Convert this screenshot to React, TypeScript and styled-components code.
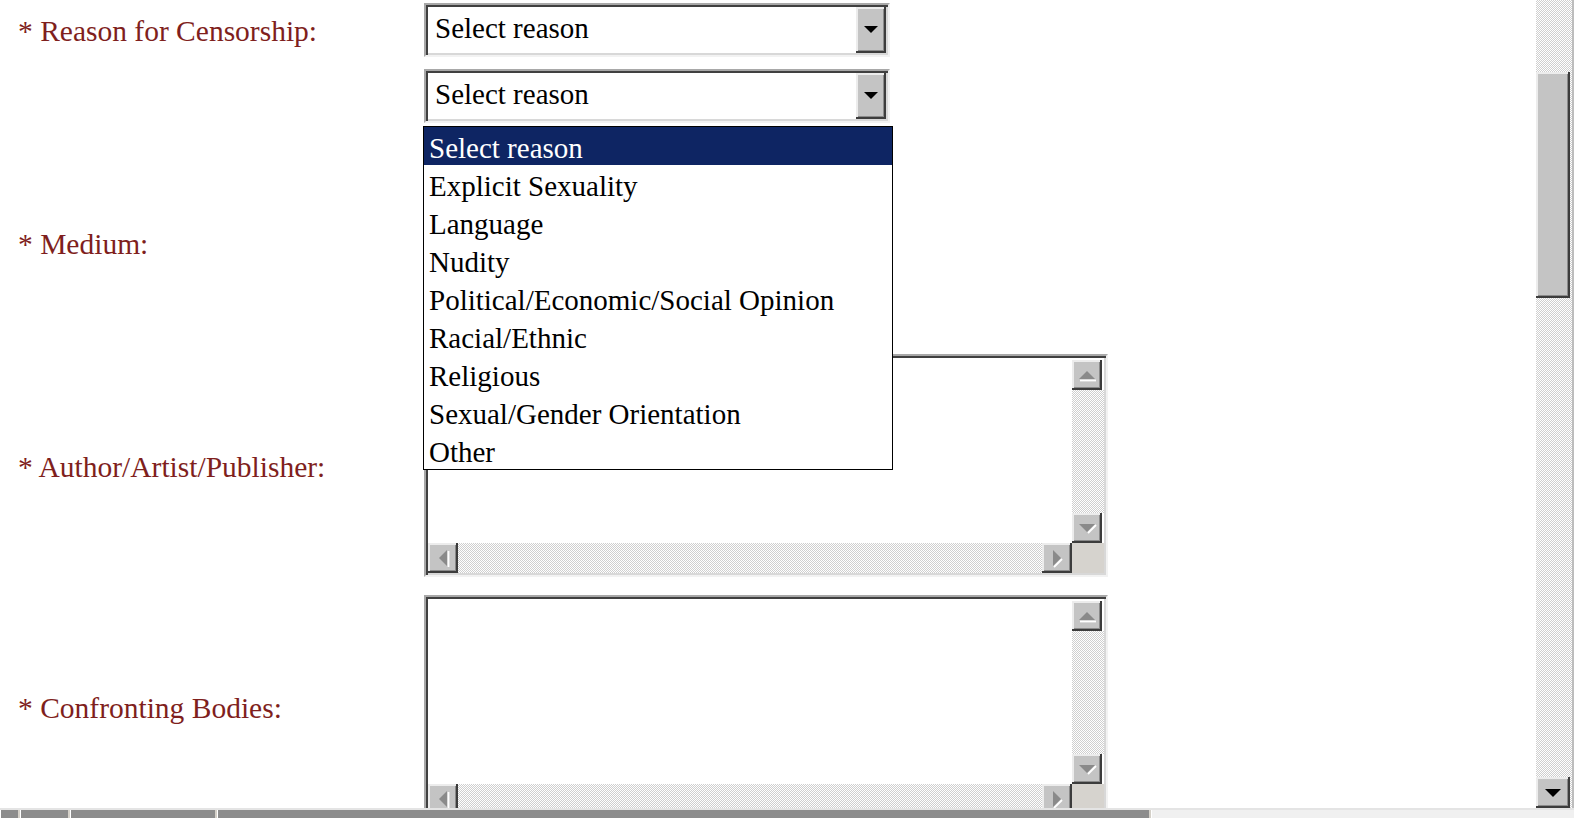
import React from "react";
import styled, { createGlobalStyle, css } from "styled-components";

const GlobalStyle = createGlobalStyle`
  html, body { margin: 0; padding: 0; background: #ffffff; }
  body {
    font-family: "Liberation Serif", "Times New Roman", serif;
    overflow: hidden;
  }
  * { box-sizing: border-box; }
`;

const sunken = css`
  border: 2px solid;
  border-color: #a8a8a8 #f2f2f2 #f2f2f2 #a8a8a8;
  box-shadow: inset 2px 2px 0 #404040, inset -2px -2px 0 #d8d8d8;
`;

const raised = css`
  background: #c4c4c4;
  box-shadow: inset -2px -2px 0 #3c3c3c, inset 2px 2px 0 #ececec,
    inset -3px -3px 0 #8a8a8a;
`;

const dither = css`
  background-color: #ffffff;
  background-image: repeating-conic-gradient(#cfcfcf 0 25%, #ffffff 0 50%);
  background-size: 2px 2px;
`;

const Window = styled.div`
  width: 1574px;
  height: 818px;
  display: flex;
  flex-direction: column;
  overflow: hidden;
  background: #ffffff;
`;

const Viewport = styled.div`
  display: flex;
  height: 808px;
`;

const Page = styled.main`
  flex: 1;
  overflow: hidden;
  background: #ffffff;
`;

const Form = styled.form`
  display: flex;
  flex-direction: column;
`;

const Row = styled.div<{ $top: number; $height: number }>`
  display: grid;
  grid-template-columns: 424px 1fr;
  align-items: center;
  margin-top: ${(p) => p.$top}px;
  height: ${(p) => p.$height}px;
  flex-shrink: 0;
`;

const Label = styled.label`
  padding-left: 18px;
  padding-top: 2px;
  color: #7f1f1d;
  font-size: 29.5px;
  line-height: 34px;
  white-space: nowrap;
`;

const Field = styled.div`
  position: relative;
  align-self: stretch;
  display: flex;
  align-items: flex-start;
`;

const Combo = styled.div`
  ${sunken};
  width: 466px;
  height: 54px;
  display: flex;
  align-items: stretch;
  padding: 2px;
  background-color: #ffffff;
`;

const ComboText = styled.span`
  flex: 1;
  padding-left: 7px;
  font-size: 29px;
  line-height: 42px;
  color: #000;
`;

const ComboButton = styled.span`
  ${raised};
  width: 30px;
  display: flex;
  align-items: center;
  justify-content: center;
`;

const List = styled.ul`
  position: absolute;
  top: 57px;
  left: -1px;
  width: 470px;
  margin: 0;
  padding: 0;
  list-style: none;
  border: 1px solid #000;
  background: #ffffff;
  z-index: 5;
`;

const Option = styled.li<{ $active?: boolean }>`
  height: 38px;
  padding: 4px 0 0 5px;
  font-size: 29px;
  line-height: 34px;
  white-space: nowrap;
  color: ${(p) => (p.$active ? "#ffffff" : "#000000")};
  background: ${(p) => (p.$active ? "#0e2563" : "transparent")};
`;

const TextBox = styled.div`
  ${sunken};
  width: 684px;
  height: 223px;
  padding: 2px;
  display: grid;
  grid-template-columns: 1fr 32px;
  grid-template-rows: 1fr 30px;
  background: #ffffff;
`;

const Area = styled.textarea`
  border: 0;
  outline: none;
  resize: none;
  overflow: hidden;
  background: #ffffff;
  font-family: "Liberation Mono", monospace;
  font-size: 16px;
  padding: 2px;
`;

const VScroll = styled.div`
  display: flex;
  flex-direction: column;
  padding-top: 2px;
`;

const HScroll = styled.div`
  display: flex;
`;

const Track = styled.div`
  flex: 1;
  ${dither};
`;

const Corner = styled.div`
  background: #d6d3ce;
`;

const ScrollBtn = styled.span<{ $w?: number; $h?: number }>`
  ${raised};
  flex: 0 0 auto;
  width: ${(p) => p.$w ?? 30}px;
  height: ${(p) => p.$h ?? 30}px;
  display: flex;
  align-items: center;
  justify-content: center;
`;

const PageScroll = styled.aside`
  width: 38px;
  display: flex;
  flex-direction: column;
  border-right: 2px solid #bdbdbd;
  ${dither};
`;

const Gap = styled.div<{ $h: number }>`
  height: ${(p) => p.$h}px;
  flex-shrink: 0;
`;

const Thumb = styled.div`
  ${raised};
  height: 226px;
  width: 34px;
  flex-shrink: 0;
`;

const Fill = styled.div`
  flex: 1;
`;

const StatusBar = styled.footer`
  height: 10px;
  display: flex;
  gap: 2px;
  border-top: 2px solid #e4e4e4;
  background: #d4d0c8;
`;

const Panel = styled.div<{ $w?: number; $light?: boolean }>`
  ${(p) => (p.$w ? `width: ${p.$w}px;` : "flex: 1;")}
  background: ${(p) => (p.$light ? "#f0f0f0" : "#8c8c8c")};
  border-left: 1px solid #ffffff;
`;

type Dir = "up" | "down" | "left" | "right";

const Arrow: React.FC<{ dir: Dir; dark?: boolean }> = ({ dir, dark }) => {
  const fill = dark ? "#000000" : "#8a8a8a";
  const pts: Record<Dir, string> = {
    up: "2,14 10,6 18,14",
    down: "2,6 18,6 10,14",
    left: "14,2 14,18 6,10",
    right: "6,2 14,10 6,18",
  };
  const shadow: Record<Dir, string> = {
    up: "3,15.5 19,15.5",
    down: "11,15 19,7",
    left: "15.5,3 15.5,19",
    right: "7,19 15,11",
  };
  return (
    <svg width="20" height="20" viewBox="0 0 20 20" aria-hidden="true">
      {!dark && (
        <polyline points={shadow[dir]} stroke="#ffffff" strokeWidth="1.8" fill="none" />
      )}
      <polygon points={pts[dir]} fill={fill} />
    </svg>
  );
};

const ComboArrow = () => (
  <svg width="14" height="8" viewBox="0 0 14 8" aria-hidden="true">
    <polygon points="0,0 14,0 7,7" fill="#000" />
  </svg>
);

const reasons = [
  "Select reason",
  "Explicit Sexuality",
  "Language",
  "Nudity",
  "Political/Economic/Social Opinion",
  "Racial/Ethnic",
  "Religious",
  "Sexual/Gender Orientation",
  "Other",
];

const Select: React.FC<{ open?: boolean }> = ({ open }) => (
  <Field>
    <Combo role="combobox" aria-expanded={open ? "true" : "false"}>
      <ComboText>Select reason</ComboText>
      <ComboButton>
        <ComboArrow />
      </ComboButton>
    </Combo>
    {open && (
      <List role="listbox">
        {reasons.map((r, i) => (
          <Option key={r} $active={i === 0} role="option">
            {r}
          </Option>
        ))}
      </List>
    )}
  </Field>
);

const ScrollText: React.FC = () => (
  <Field>
    <TextBox>
      <Area />
      <VScroll>
        <ScrollBtn>
          <Arrow dir="up" />
        </ScrollBtn>
        <Track />
        <ScrollBtn>
          <Arrow dir="down" />
        </ScrollBtn>
      </VScroll>
      <HScroll>
        <ScrollBtn>
          <Arrow dir="left" />
        </ScrollBtn>
        <Track />
        <ScrollBtn>
          <Arrow dir="right" />
        </ScrollBtn>
      </HScroll>
      <Corner />
    </TextBox>
  </Field>
);

export default function App() {
  return (
    <>
      <GlobalStyle />
      <Window>
        <Viewport>
          <Page>
            <Form>
              <Row $top={3} $height={54}>
                <Label>* Reason for Censorship:</Label>
                <Select />
              </Row>
              <Row $top={12} $height={54}>
                <span />
                <Select open />
              </Row>
              <Row $top={8} $height={223}>
                <Label>* Medium:</Label>
                <span />
              </Row>
              <Row $top={0} $height={223}>
                <Label>* Author/Artist/Publisher:</Label>
                <ScrollText />
              </Row>
              <Row $top={18} $height={223}>
                <Label>* Confronting Bodies:</Label>
                <ScrollText />
              </Row>
            </Form>
          </Page>
          <PageScroll>
            <Gap $h={72} />
            <Thumb />
            <Fill />
            <ScrollBtn $w={34} $h={31}>
              <Arrow dir="down" dark />
            </ScrollBtn>
          </PageScroll>
        </Viewport>
        <StatusBar>
          <Panel $w={18} />
          <Panel $w={48} />
          <Panel $w={145} />
          <Panel $w={932} />
          <Panel $light />
        </StatusBar>
      </Window>
    </>
  );
}
